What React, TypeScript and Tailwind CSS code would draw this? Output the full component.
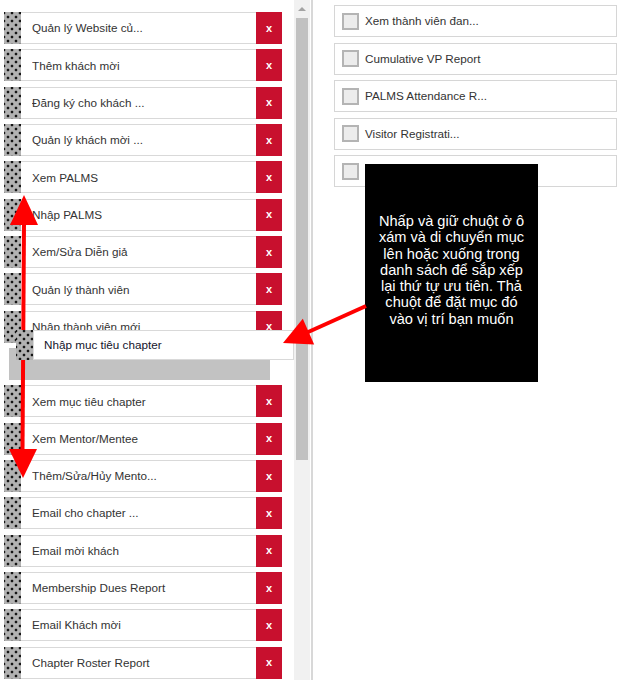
const leftItems: (string | null)[] = [
  'Quản lý Website củ...',
  'Thêm khách mời',
  'Đăng ký cho khách ...',
  'Quản lý khách mời ...',
  'Xem PALMS',
  'Nhập PALMS',
  'Xem/Sửa Diễn giả',
  'Quản lý thành viên',
  'Nhập thành viên mới',
  null, // drop placeholder
  'Xem mục tiêu chapter',
  'Xem Mentor/Mentee',
  'Thêm/Sửa/Hủy Mento...',
  'Email cho chapter ...',
  'Email mời khách',
  'Membership Dues Report',
  'Email Khách mời',
  'Chapter Roster Report',
]

const rightItems = [
  'Xem thành viên đan...',
  'Cumulative VP Report',
  'PALMS Attendance R...',
  'Visitor Registrati...',
  '',
]

const handle =
  'bg-[#b2b2b2] bg-[radial-gradient(circle,#151515_1.1px,transparent_1.7px),radial-gradient(circle,#151515_1.1px,transparent_1.7px)] bg-[size:8px_8px] bg-[position:0_1px,4px_5px]'

function Row({ label }: { label: string }) {
  return (
    <div className="flex h-[32px] w-[278px] shrink-0">
      <div className={`w-[17px] shrink-0 ${handle}`} />
      <div className="flex flex-1 items-center border-y border-[#d9d9d9] bg-white pl-[11px] text-[11.7px] text-[#333]">
        <span className="flex-1 truncate">{label}</span>
        <button className="flex h-[32px] w-[26px] -my-px items-center justify-center bg-[#c8102e] text-[11px] font-bold text-white">
          x
        </button>
      </div>
    </div>
  )
}

export default function App() {
  return (
    <div className="relative flex h-[696px] w-[637px] overflow-hidden bg-white font-['Liberation_Sans',Arial,sans-serif]">
      {/* left: sortable list */}
      <div className="flex h-[680px] w-[313px] shrink-0 overflow-hidden border-r-2 border-[#d8d8d8]">
        <div className="flex w-[294px] flex-col gap-[5.33px] pl-[4px] pt-[12px]">
          {leftItems.map((l, i) =>
            l === null ? (
              <div key={i} className="ml-[5px] h-[32px] w-[261px] shrink-0 bg-[#c2c2c2]" />
            ) : (
              <Row key={i} label={l} />
            ),
          )}
        </div>
        <div className="flex w-[16px] flex-col bg-[#f1f1f1] px-[2px]">
          <div className="flex h-[18px] items-center justify-center">
            <div className="h-0 w-0 border-x-[4px] border-b-[4px] border-x-transparent border-b-[#a3a3a3]" />
          </div>
          <div className="h-[442px] bg-[#c1c1c1]" />
        </div>
      </div>

      {/* right: available items */}
      <div className="ml-[21px] flex w-[283px] flex-col gap-[5.5px] pt-[5px]">
        {rightItems.map((r, i) => (
          <div
            key={i}
            className="flex h-[32px] items-center gap-[6px] border border-[#d6d6d6] bg-white pl-[7px] text-[11.7px] text-[#333]"
          >
            <div className="h-[17px] w-[17px] border-2 border-[#b4b4b4] bg-[#ececec]" />
            <span>{r}</span>
          </div>
        ))}
      </div>

      {/* vertical double arrow */}
      <svg className="pointer-events-none absolute left-0 top-0 z-10" width="637" height="696">
        <line x1="24" y1="222" x2="22.5" y2="452" stroke="#f00" strokeWidth="4" />
        <polygon points="24,195 10,225 38,225" fill="#f00" />
        <polygon points="23,478 9,449 37,449" fill="#f00" />
      </svg>

      {/* item being dragged */}
      <div className="absolute left-[16px] top-[330px] z-20 flex h-[30px] w-[278px]">
        <div className={`w-[17px] shrink-0 ${handle}`} />
        <div className="flex flex-1 items-center border border-[#d9d9d9] bg-white pl-[10px] text-[11.7px] text-[#14142b]">
          Nhập mục tiêu chapter
        </div>
      </div>

      {/* help callout */}
      <div className="absolute left-[365px] top-[164px] z-20 flex h-[218px] w-[173px] items-center justify-center bg-black pb-[6px] text-center text-[14.6px] leading-[16.3px] text-white">
        <p>
          Nhấp và giữ chuột ở ô
          <br />
          xám và di chuyển mục
          <br />
          lên hoặc xuống trong
          <br />
          danh sách để sắp xếp
          <br />
          lại thứ tự ưu tiên. Thả
          <br />
          chuột để đặt mục đó
          <br />
          vào vị trí bạn muốn
        </p>
      </div>

      {/* diagonal arrow */}
      <svg className="pointer-events-none absolute left-0 top-0 z-30" width="637" height="696">
        <line x1="366" y1="306" x2="306" y2="333" stroke="#f00" strokeWidth="4" />
        <polygon points="283,343 302.8,318.8 314.2,344.4" fill="#f00" />
      </svg>
    </div>
  )
}
